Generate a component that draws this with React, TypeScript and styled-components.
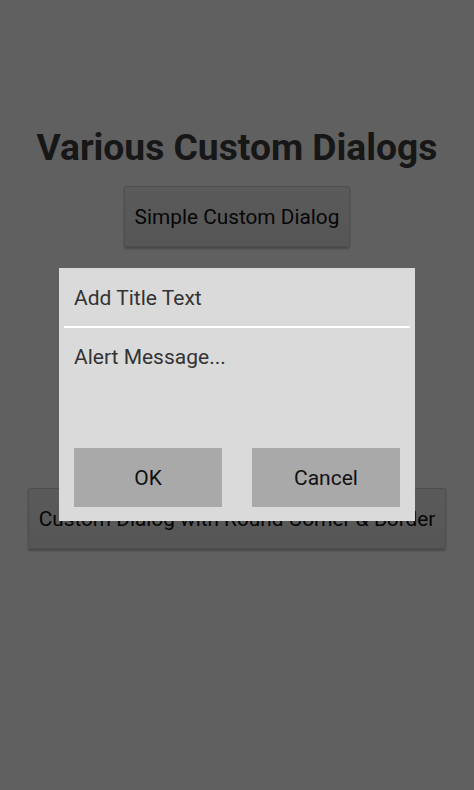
import styled, { createGlobalStyle } from "styled-components";

const GlobalStyle = createGlobalStyle`
  html, body {
    margin: 0;
    padding: 0;
    height: 100%;
  }
  body {
    font-family: Roboto, "Noto Sans", sans-serif;
    background: #efefef;
  }
`;

const Screen = styled.div`
  position: relative;
  width: 474px;
  height: 790px;
  overflow: hidden;
  background: #efefef;
`;

const Content = styled.main`
  display: flex;
  flex-direction: column;
  align-items: center;
  padding-top: 124px;
`;

const Heading = styled.h1`
  margin: 0;
  font-size: 37.2px;
  font-weight: 700;
  color: #3a3a3a;
  line-height: 46px;
`;

const HoloButton = styled.button<{ $wide?: boolean }>`
  margin-top: ${(p) => (p.$wide ? "241px" : "16px")};
  width: ${(p) => (p.$wide ? "418px" : "226px")};
  height: 61px;
  border: 1px solid #c4c4c4;
  border-radius: 2px;
  background: linear-gradient(#e2e2e2, #d6d6d6);
  box-shadow: 0 2px 2px rgba(0, 0, 0, 0.25);
  font-family: Roboto, "Noto Sans", sans-serif;
  font-size: 20.8px;
  color: #111;
  padding: 0;
`;

const Overlay = styled.div`
  position: absolute;
  inset: 0;
  background: rgba(0, 0, 0, 0.6);
  display: flex;
  justify-content: center;
  align-items: flex-start;
  padding-top: 268px;
`;

const Dialog = styled.div`
  width: 356px;
  height: 253px;
  background: #dadada;
  display: flex;
  flex-direction: column;
  padding: 0 5px;
  box-sizing: border-box;
`;

const DialogTitle = styled.div`
  height: 57px;
  display: flex;
  align-items: center;
  padding: 1px 10px 0;
  font-size: 21px;
  color: #333;
`;

const Divider = styled.div`
  height: 2px;
  background: #fff;
`;

const Message = styled.div`
  padding: 17px 10px 0;
  font-size: 21px;
  color: #333;
  flex: 1;
`;

const Actions = styled.div`
  display: flex;
  gap: 30px;
  padding: 0 10px 14px;
`;

const ActionButton = styled.button`
  flex: 1;
  height: 59px;
  border: none;
  background: #a9a9a9;
  font-family: Roboto, "Noto Sans", sans-serif;
  font-size: 21px;
  color: #111;
  padding: 0;
`;

export default function App() {
  return (
    <Screen>
      <GlobalStyle />
      <Content>
        <Heading>Various Custom Dialogs</Heading>
        <HoloButton>Simple Custom Dialog</HoloButton>
        <HoloButton $wide>Custom Dialog with Round Corner &amp; Border</HoloButton>
      </Content>
      <Overlay>
        <Dialog>
          <DialogTitle>Add Title Text</DialogTitle>
          <Divider />
          <Message>Alert Message...</Message>
          <Actions>
            <ActionButton>OK</ActionButton>
            <ActionButton>Cancel</ActionButton>
          </Actions>
        </Dialog>
      </Overlay>
    </Screen>
  );
}
